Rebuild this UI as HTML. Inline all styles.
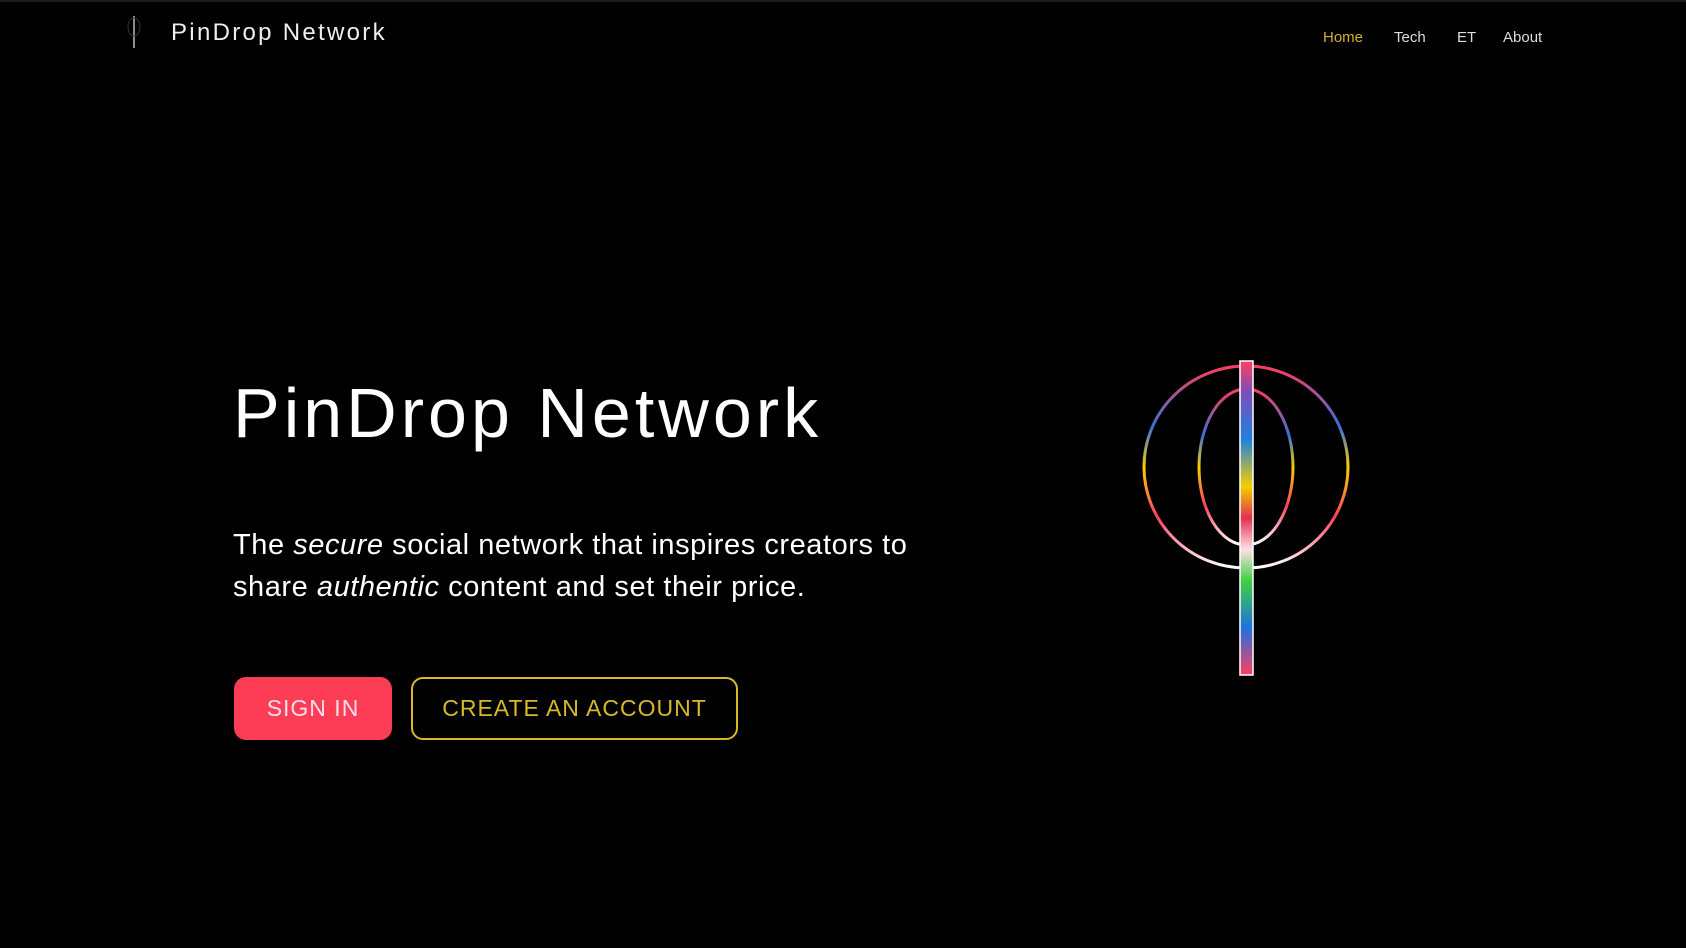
<!DOCTYPE html>
<html><head><meta charset="utf-8"><style>
html,body{margin:0;padding:0;background:#000;width:1686px;height:948px;overflow:hidden;font-family:"Liberation Sans",sans-serif;color:#fff}
.topline{position:absolute;left:0;top:0;width:1686px;height:2px;background:#1a1a1a}
.brand{position:absolute;left:171px;top:19px;font-size:24px;letter-spacing:2.3px;color:#eee}
.nav{position:absolute;top:29px;font-size:15px;color:#ddd}
h1{position:absolute;left:233px;top:373px;margin:0;font-weight:400;font-size:70px;letter-spacing:4px;white-space:nowrap}
p{position:absolute;left:233px;top:524px;margin:0;font-size:29px;line-height:42px;width:740px;letter-spacing:0.55px}
.btn{position:absolute;top:677px;height:63px;box-sizing:border-box;border-radius:12px;display:flex;align-items:center;justify-content:center;font-size:23px;letter-spacing:1px}
.b1{left:234px;width:158px;background:#fc3d55;color:#fde}
.b2{left:411px;width:327px;border:2px solid #d7b92a;color:#d7b92a}
</style></head><body>
<div class="topline"></div>
<svg style="position:absolute;left:125px;top:14px" width="20" height="36"><line x1="9" y1="2" x2="9" y2="34" stroke="#bbb" stroke-width="1.5"/><ellipse cx="9" cy="13" rx="6" ry="9" fill="none" stroke="#333" stroke-width="1"/></svg>
<div class="brand">PinDrop Network</div>
<div class="nav" style="left:1323px;color:#d4b030">Home</div>
<div class="nav" style="left:1394px">Tech</div>
<div class="nav" style="left:1457px">ET</div>
<div class="nav" style="left:1503px">About</div>
<h1>PinDrop Network</h1>
<p>The <i>secure</i> social network that inspires creators to share <i>authentic</i> content and set their price.</p>
<div class="btn b1">SIGN IN</div>
<div class="btn b2">CREATE AN ACCOUNT</div>
<svg style="position:absolute;left:0;top:0" width="1686" height="948">
<defs>
<linearGradient id="g1" x1="0" y1="0" x2="0" y2="1">
<stop offset="0" stop-color="#ff3d60"/><stop offset="0.3" stop-color="#3a6fd8"/><stop offset="0.5" stop-color="#f5d000"/><stop offset="0.75" stop-color="#ff4060"/><stop offset="1" stop-color="#ffffff"/></linearGradient>
<linearGradient id="g2" x1="0" y1="0" x2="0" y2="1">
<stop offset="0" stop-color="#ff3d60"/><stop offset="0.1" stop-color="#7a4fb8"/><stop offset="0.25" stop-color="#2080e0"/><stop offset="0.4" stop-color="#f5d000"/><stop offset="0.5" stop-color="#e33050"/><stop offset="0.6" stop-color="#ffe0e8"/><stop offset="0.7" stop-color="#40d040"/><stop offset="0.85" stop-color="#2070e0"/><stop offset="1" stop-color="#ff4060"/></linearGradient>
</defs>
<ellipse cx="1246" cy="467" rx="102" ry="101" fill="none" stroke="url(#g1)" stroke-width="3"/>
<ellipse cx="1246" cy="467" rx="47" ry="78" fill="none" stroke="url(#g1)" stroke-width="3"/>
<rect x="1240" y="361" width="13" height="314" fill="url(#g2)" stroke="#fff" stroke-width="1.5"/>
</svg>
</body></html>
